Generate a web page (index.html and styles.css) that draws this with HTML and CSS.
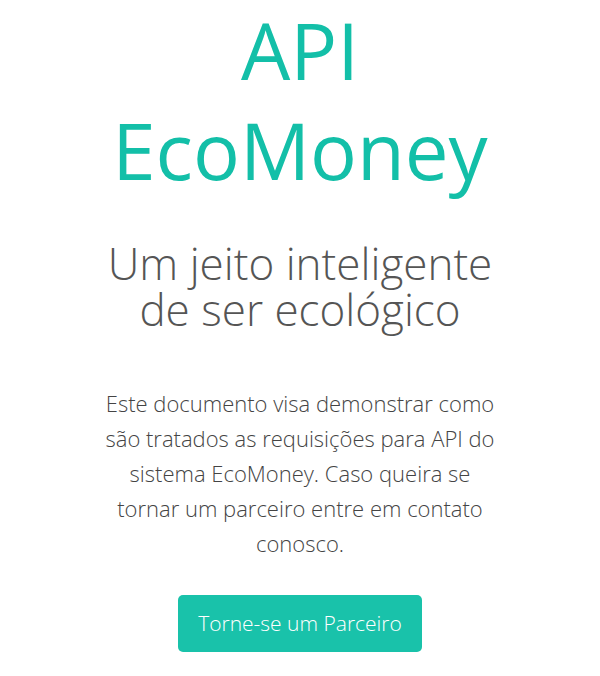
FILE: index.html
```html
<!DOCTYPE html>
<html lang="pt">
<head>
<meta charset="utf-8">
<title>API EcoMoney</title>
<link rel="stylesheet" href="styles.css">
</head>
<body>
<main class="hero">
  <h1 class="title">API<br>EcoMoney</h1>
  <h2 class="subtitle">Um jeito inteligente<br>de ser ecológico</h2>
  <p class="lead">Este documento visa demonstrar como são tratados as requisições para API do sistema EcoMoney. Caso queira se tornar um parceiro entre em contato conosco.</p>
  <a class="btn" href="#">Torne-se um Parceiro</a>
</main>
</body>
</html>
```
FILE: styles.css
```css
html, body {
  margin: 0;
  padding: 0;
  background: #ffffff;
}
body {
  font-family: "Open Sans", "Noto Sans", sans-serif;
}
.hero {
  display: flex;
  flex-direction: column;
  align-items: center;
  text-align: center;
}
.title {
  margin: 0;
  font-size: 78px;
  line-height: 100px;
  font-weight: 400;
  color: #13bfa8;
}
.subtitle {
  margin: 40px 0 0;
  font-size: 44px;
  line-height: 46px;
  font-weight: 300;
  color: #555555;
}
.lead {
  width: 392px;
  margin: 54px 0 0;
  font-size: 22px;
  line-height: 35px;
  font-weight: 300;
  color: #444444;
}
.btn {
  margin-top: 34px;
  display: inline-block;
  padding: 12px 20px;
  background: #19c2aa;
  color: #ffffff;
  border-radius: 5px;
  font-size: 21px;
  line-height: 33px;
  font-weight: 300;
  text-decoration: none;
}
```
